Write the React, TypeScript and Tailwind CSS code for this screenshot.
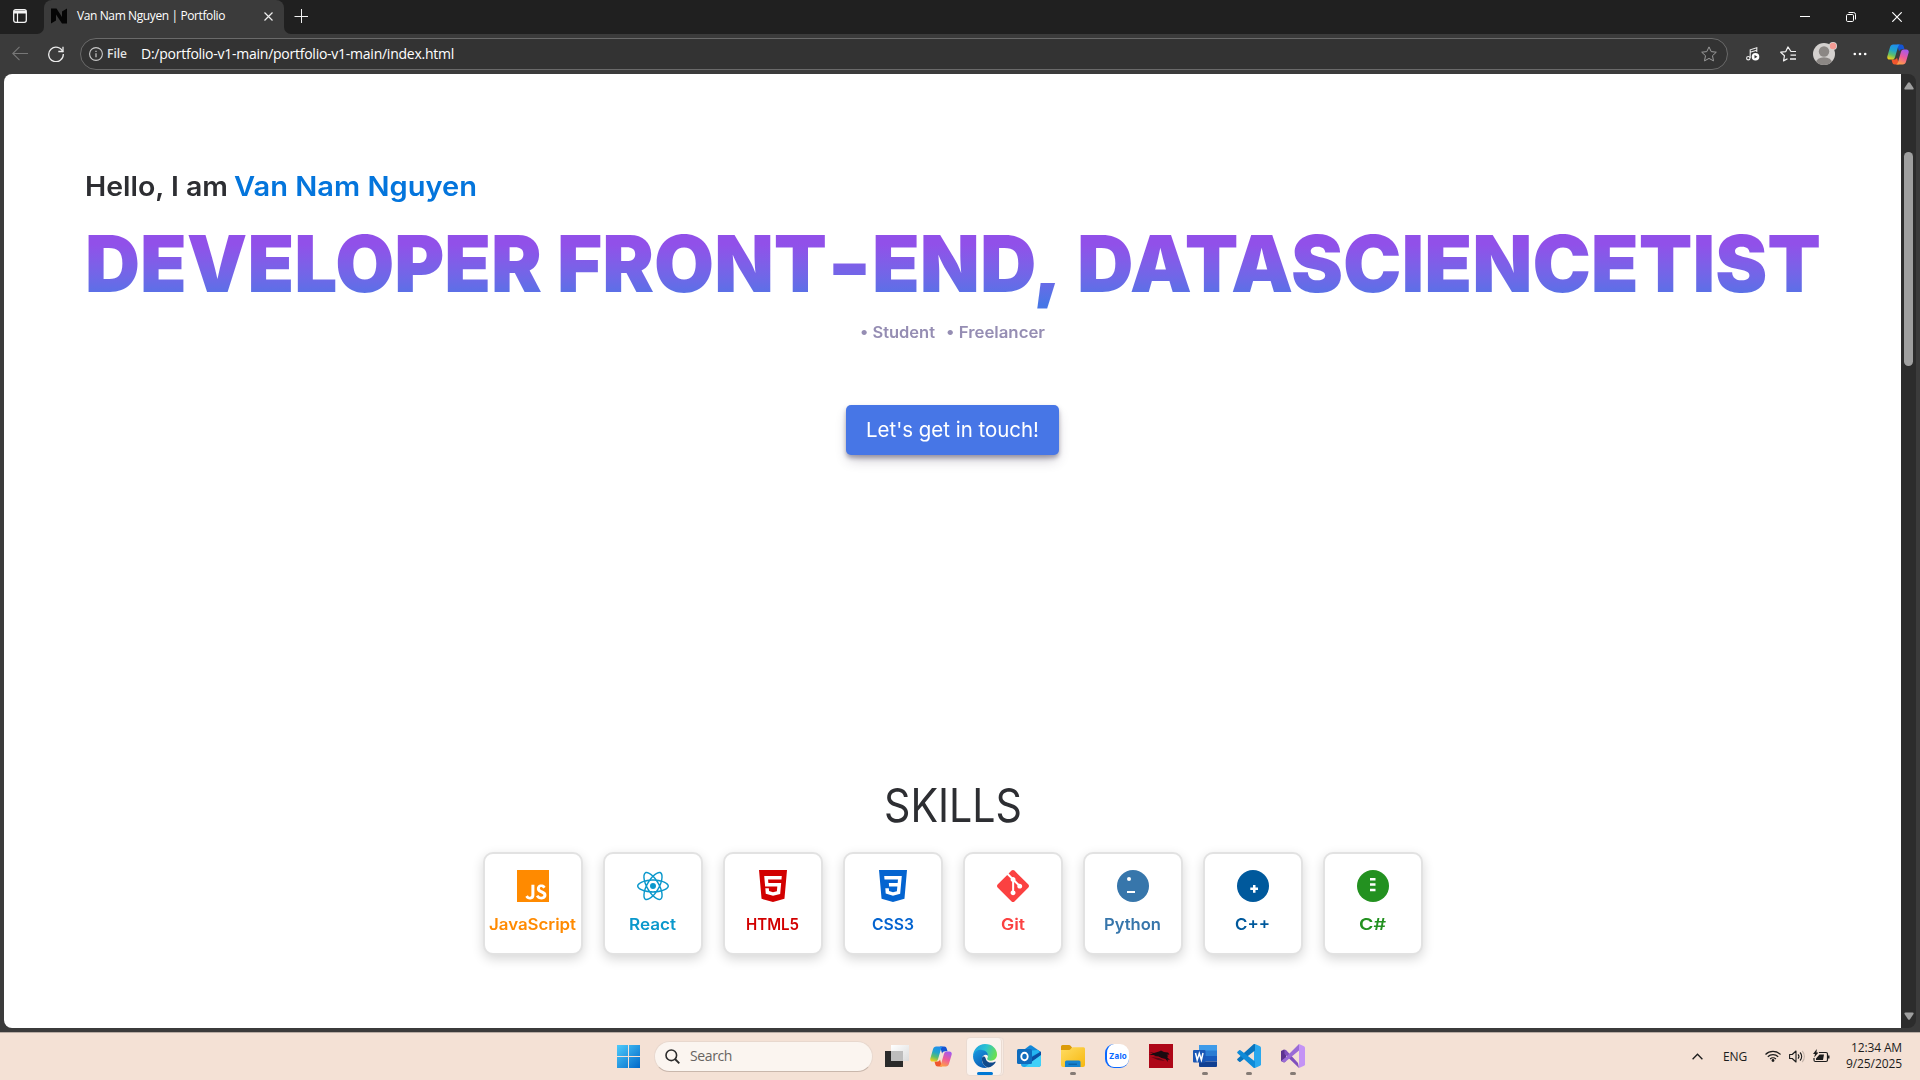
import { useLayoutEffect, useRef, type ReactNode } from "react";
import { SiGit, SiHtml5, SiJavascript, SiReact } from "react-icons/si";

/* Text tracked (or stretched) so that it fills an exact advance width. */
function Fit({ w, className = "", stretch = false, children }: { w: number; className?: string; stretch?: boolean; children: string }) {
  const ref = useRef<HTMLSpanElement>(null);
  useLayoutEffect(() => {
    const el = ref.current;
    if (!el) return;
    el.style.letterSpacing = "0px";
    el.style.transform = "none";
    const natural = el.getBoundingClientRect().width;
    if (stretch) {
      el.style.transform = `scaleX(${w / natural})`;
      el.style.marginRight = `${w - natural}px`;
    } else {
      el.style.letterSpacing = `${(w - natural) / children.length}px`;
    }
  }, [w, children, stretch]);
  return (
    <span ref={ref} className={`inline-block origin-left whitespace-pre ${className}`}>
      {children}
    </span>
  );
}

/* One piece of the headline, with its own copy of the vertical gradient. */
const Headline = ({ w, children }: { w: number; children: string }) => (
  <Fit w={w} stretch className="bg-linear-to-b from-[#9150e9] from-30% to-[#4776e6] to-90% bg-clip-text text-transparent">
    {children}
  </Fit>
);

function Copilot({ id }: { id: string }) {
  return (
    <svg width="22" height="21" viewBox="0 0 22 21" className="shrink-0">
      <defs>
        <linearGradient id={`${id}a`} x1="0.6" y1="0" x2="0.3" y2="1">
          <stop offset="0" stopColor="#1f8df0" />
          <stop offset="0.4" stopColor="#22a5c9" />
          <stop offset="0.7" stopColor="#5fbe6a" />
          <stop offset="1" stopColor="#f3cf16" />
        </linearGradient>
        <linearGradient id={`${id}b`} x1="0.7" y1="0" x2="0.3" y2="1">
          <stop offset="0" stopColor="#a259f0" />
          <stop offset="0.5" stopColor="#ee5a9a" />
          <stop offset="1" stopColor="#ffa243" />
        </linearGradient>
      </defs>
      <path d="M10 0.5h4.3c1.4 0 2 .8 2.4 2l.8 2.8h-2.4c-1.6 0-2.5.8-3 2.3z" fill="#1454d4" />
      <path d="M12 20.5H7.8c-1.5 0-2.1-.8-2.5-2l-.8-2.9h2.6c1.6 0 2.4-.8 2.9-2.2z" fill="#f0562d" />
      <path d="M6.2.5h7c-1.2.2-1.8 1.3-2.2 2.6L8 13.2c-.5 1.600-1.400 2.400-3 2.400H2.600C.6 15.600-.1 14 .4 12.200L3 3.300C3.600 1.500 4.500.5 6.200.5z" fill={`url(#${id}a)`} />
      <path d="M15.800 20.500h-7c1.200-.2 1.800-1.300 2.200-2.600l3-10.100c.5-1.600 1.400-2.400 3-2.400h2.400c2 0 2.700 1.600 2.200 3.400L19 17.700c-.6 1.800-1.500 2.800-3.200 2.800z" fill={`url(#${id}b)`} />
    </svg>
  );
}

function TabStrip() {
  return (
    <div className="flex h-[34px] items-center bg-[#202020]">
      <svg width="14" height="14" viewBox="0 0 14 14" className="ml-[13px] mt-[-2px]">
        <rect x="0.7" y="0.7" width="12.6" height="12.6" rx="2" fill="none" stroke="#f4f4f4" strokeWidth="1.300" />
        <path d="M1 1.500h12V4.500H1z" fill="#f4f4f4" />
        <path d="M4.500 4v9" stroke="#f4f4f4" strokeWidth="1.200" />
      </svg>
      <div className="flex h-full w-[17px] items-end justify-end">
        <svg width="7" height="7" viewBox="0 0 7 7">
          <path d="M7 0v7H0a7 7 0 0 0 7-7z" fill="#3b3b3b" />
        </svg>
      </div>
      <div className="flex h-full w-[240px] items-center rounded-t-[8px] bg-[#3b3b3b] pb-[2px]">
        <svg width="16" height="16" viewBox="0 0 16 16" className="ml-[7px]">
          <path d="M0 .5h5.500l5.500 8.500V3.500L16 .5v15h-5L5 6.500v6L0 15.500z" fill="#050505" />
        </svg>
        <div className="ml-[10px] h-4 w-[149px] font-['Open_Sans'] text-[12px] leading-4 text-white">
          <Fit w={148}>Van Nam Nguyen | Portfolio</Fit>
        </div>
        <svg width="9" height="9" viewBox="0 0 9 9" className="ml-[38px] mt-px">
          <path d="M.5.5l8 8M8.500.5l-8 8" stroke="#ededed" strokeWidth="1.200" />
        </svg>
      </div>
      <div className="flex h-full w-[7px] items-end">
        <svg width="7" height="7" viewBox="0 0 7 7">
          <path d="M0 0v7h7a7 7 0 0 1-7-7z" fill="#3b3b3b" />
        </svg>
      </div>
      <svg width="14" height="14" viewBox="0 0 14 14" className="ml-[3px] mt-[-3px]">
        <path d="M7.500 0v14M.5 7.500h14" stroke="#f1f1f1" strokeWidth="1" />
      </svg>
      <div className="ml-auto flex items-center pb-px pr-[18px] text-white">
        <svg width="10" height="10" viewBox="0 0 10 10">
          <path d="M0 4.500h10" stroke="currentColor" />
        </svg>
        <svg width="10" height="10" viewBox="0 0 10 10" className="ml-[36px]">
          <rect x=".5" y="2.500" width="7" height="7" rx="1.200" fill="none" stroke="currentColor" />
          <path d="M2.500.5h5a2 2 0 0 1 2 2v5" fill="none" stroke="currentColor" />
        </svg>
        <svg width="10" height="10" viewBox="0 0 10 10" className="ml-[36px]">
          <path d="M.3.3l9.400 9.400M9.700.3L.3 9.700" stroke="currentColor" strokeWidth="1.200" />
        </svg>
      </div>
    </div>
  );
}

function Toolbar() {
  return (
    <div className="flex h-10 items-center bg-[#3b3b3b]">
      <svg width="16" height="16" viewBox="0 0 16 16" className="ml-3">
        <path d="M16 7.500H.8M7.500.9L.8 7.500l6.700 6.600" fill="none" stroke="#777" strokeWidth="1.100" />
      </svg>
      <svg width="16" height="16" viewBox="0 0 16 16" className="ml-5">
        <path d="M14.900 6A7.300 7.300 0 1 0 15.300 8" fill="none" stroke="#ececec" strokeWidth="1.300" />
        <path d="M15 .7v4.800h-4.700" fill="none" stroke="#ececec" strokeWidth="1.300" />
      </svg>
      <div className="ml-4 flex h-8 w-[1648px] items-center rounded-full border border-[#6a6a6a] bg-[#333333] pl-[8px] pr-[10px]">
        <svg width="14" height="14" viewBox="0 0 14 14">
          <circle cx="7" cy="7" r="6.400" fill="none" stroke="#c9c9c9" strokeWidth="1.100" />
          <path d="M7 6.200v4M7 3.800v1.200" stroke="#c9c9c9" strokeWidth="1.200" />
        </svg>
        <div className="ml-[4px] h-4 w-[34px] font-['Open_Sans'] text-[12px] font-semibold leading-4 text-[#e4e4e4]">
          <Fit w={20}>File</Fit>
        </div>
        <div className="h-[18px] font-['Open_Sans'] text-[14px] leading-[18px] text-white">
          <Fit w={313}>D:/portfolio-v1-main/portfolio-v1-main/index.html</Fit>
        </div>
        <svg width="16" height="16" viewBox="0 0 16 16" className="ml-auto">
          <path d="M8 .9l2.200 4.700 5.100.6-3.800 3.500 1 5.200L8 12.400 3.500 14.900l1-5.200L.7 6.200l5.100-.6z" fill="none" stroke="#9a9a9a" strokeLinejoin="round" />
        </svg>
      </div>
      <svg width="14" height="14" viewBox="0 0 14 14" className="ml-[18px]">
        <path d="M4.200 11V2.800l6.600-2V5M4.200 5.200l6.600-2" fill="none" stroke="#ededed" strokeWidth="1.100" />
        <circle cx="2.300" cy="11.200" r="1.700" fill="none" stroke="#ededed" strokeWidth="1.100" />
        <circle cx="9.500" cy="9.800" r="3.800" fill="#fff" />
        <path d="M8.500 8l2.900 1.800-2.900 1.800z" fill="#333" />
      </svg>
      <svg width="17" height="16" viewBox="0 0 17 16" className="ml-5">
        <path d="M16 5.500h-5L7.900.9 5.800 5.600.7 6.200l3.800 3.500-1 5.200L7.500 12.700" fill="none" stroke="#f1f1f1" strokeWidth="1.200" strokeLinejoin="round" />
        <path d="M10.500 9.200H16M10 13H16" stroke="#f1f1f1" strokeWidth="1.300" />
      </svg>
      <svg width="24" height="24" viewBox="0 0 24 24" className="ml-4">
        <defs>
          <clipPath id="face">
            <circle cx="11" cy="12" r="11" />
          </clipPath>
        </defs>
        <circle cx="11" cy="12" r="11" fill="#d3d0ce" />
        <g clipPath="url(#face)" fill="#8b8784">
          <circle cx="11" cy="9.500" r="5.200" />
          <ellipse cx="11" cy="20.500" rx="8" ry="5.200" />
        </g>
        <circle cx="20" cy="4" r="4" fill="#d8d5d3" />
        <circle cx="20" cy="4" r="3.200" fill="#f59b94" />
      </svg>
      <svg width="14" height="4" viewBox="0 0 14 4" className="ml-4">
        <circle cx="1.800" cy="2" r="1.300" fill="#fff" />
        <circle cx="7" cy="2" r="1.300" fill="#fff" />
        <circle cx="12.200" cy="2" r="1.300" fill="#fff" />
      </svg>
      <div className="ml-5">
        <Copilot id="bar" />
      </div>
    </div>
  );
}

const Css3 = () => (
  <svg width="32" height="32" viewBox="0 0 24 24" fill="currentColor">
    <path d="M1.500 0h21l-1.910 21.563L11.977 24l-8.565-2.438L1.500 0zm17.090 4.413L5.410 4.410l.213 2.622 10.125.002-.255 2.716h-6.640l.24 2.573h6.182l-.366 3.523-2.910.804-2.956-.810-.188-2.110h-2.610l.29 3.855L12 19.288l5.373-1.530L18.590 4.414z" />
  </svg>
);

const Disc = ({ children }: { children: ReactNode }) => (
  <svg width="32" height="32" viewBox="0 0 32 32">
    <circle cx="16" cy="16" r="16" fill="currentColor" />
    <g fill="#fff">{children}</g>
  </svg>
);

const skills = [
  { name: "JavaScript", w: 87, color: "text-[#ff8a00]", icon: <SiJavascript size={32} /> },
  { name: "React", w: 47, color: "text-[#0a98cc]", icon: <SiReact size={32} /> },
  { name: "HTML5", w: 53, color: "text-[#d20000]", icon: <SiHtml5 size={32} /> },
  { name: "CSS3", w: 42, color: "text-[#0464d0]", icon: <Css3 /> },
  { name: "Git", w: 24, color: "text-[#fb4141]", icon: <SiGit size={32} /> },
  {
    name: "Python", w: 57, color: "text-[#3776ab]",
    icon: (
      <Disc>
        <circle cx="12" cy="9" r="2" />
        <path d="M10 21h8v2h-8z" />
      </Disc>
    ),
  },
  {
    name: "C++", w: 35, color: "text-[#00599c]",
    icon: (
      <Disc>
        <path d="M16 15h2.500v2.500H21v2.500h-2.500v2.700H16V20h-2.700v-2.500H16z" />
      </Disc>
    ),
  },
  {
    name: "C#", w: 27, color: "text-[#239120]",
    icon: (
      <Disc>
        <path d="M13 8h5.500v2.500H13zM13 13.300h5.500v2.500H13zM13 18.700h5.500v2.500H13z" />
      </Disc>
    ),
  },
];

function Page() {
  return (
    <main className="flex h-[954px] w-[1897px] flex-col items-center overflow-hidden rounded-l-[8px] bg-white font-['Inter']">
      <div className="mt-[95px] flex h-9 w-full pl-[81px] text-[27px] font-semibold leading-9 text-[#2d2e32]">
        <Fit w={143} stretch>Hello, I am</Fit>
        <Fit w={243} stretch className="ml-[6px] text-[#0475dc]">Van Nam Nguyen</Fit>
      </div>
      <h1 className="mt-[9px] flex h-[100px] w-full pl-[81px] text-[78px] font-black leading-[100px]">
        <Headline w={457}>DEVELOPER</Headline>
        <div className="ml-[15px] flex">
          <Headline w={270}>FRONT</Headline>
          <Headline w={45}>-</Headline>
          <Headline w={190}>END,</Headline>
        </div>
        <div className="ml-[15px]">
          <Headline w={744}>DATASCIENCETIST</Headline>
        </div>
      </h1>
      <div className="mt-[6px] flex h-6 w-[185px] text-base font-semibold leading-6 text-[#958db3]">
        <Fit w={75} stretch>• Student</Fit>
        <Fit w={99} stretch className="ml-[11px]">• Freelancer</Fit>
      </div>
      <button className="mt-[61px] flex h-[50px] w-[213px] justify-center rounded-[5px] bg-[#4776e6] text-[20.500px] leading-[50px] text-white shadow-[0_3px_4px_rgba(45,35,66,0.35),0_7px_13px_-3px_rgba(45,35,66,0.3)]">
        <Fit w={173} stretch>Let's get in touch!</Fit>
      </button>
      <h2 className="mt-[321px] flex h-[58px] text-[46px] font-normal leading-[58px] text-[#2d2e32]">
        <Fit w={138} stretch>SKILLS</Fit>
      </h2>
      <div className="mt-[18px] flex gap-5 pl-px">
        {skills.map((s) => (
          <div key={s.name} className={`flex h-[103px] w-[100px] flex-col items-center rounded-[10px] border-2 border-[#e2e2e2] bg-white pt-4 shadow-[0_4px_12px_rgba(0,0,0,0.16)] ${s.color}`}>
            {s.icon}
            <div className="mt-[10px] flex h-6 pr-px text-base font-semibold leading-6">
              <Fit w={s.w} stretch>{s.name}</Fit>
            </div>
          </div>
        ))}
      </div>
    </main>
  );
}

function Scrollbar() {
  return (
    <div className="flex h-[954px] w-[15px] flex-col items-center rounded-r-[8px] bg-[#2c2c2c]">
      <svg width="10" height="8" viewBox="0 0 10 8" className="mt-[8px] shrink-0">
        <path d="M4 .7q1-1 2 0l3.500 5.300q.5 1.500-1 1.500h-7q-1.500 0-1-1.500z" fill="#9f9f9f" />
      </svg>
      <div className="mt-[62px] h-[214px] w-[9px] shrink-0 rounded-full bg-[#9f9f9f]" />
      <svg width="10" height="8" viewBox="0 0 10 8" className="mb-[8px] mt-auto shrink-0">
        <path d="M4 7.300q1 1 2 0L9.500 2Q10 .5 8.500.5h-7Q0 .5.500 2z" fill="#9f9f9f" />
      </svg>
    </div>
  );
}

const Edge = () => (
  <svg width="24" height="24" viewBox="0 0 24 24">
    <defs>
      <linearGradient id="eg" x1="0" y1="0.2" x2="1" y2="0.5">
        <stop offset="0" stopColor="#1d9fe0" />
        <stop offset="0.5" stopColor="#2cc3d2" />
        <stop offset="1" stopColor="#6bdf4e" />
      </linearGradient>
      <linearGradient id="eb" x1="0" y1="0" x2="0.6" y2="1">
        <stop offset="0" stopColor="#1a9be2" />
        <stop offset="1" stopColor="#0b5cb4" />
      </linearGradient>
    </defs>
    <path d="M0 12C.3 5 5.500 0 12 0c7.500 0 12 5 12 10.300 0 4-2.700 6.400-6.200 6.400-2.600 0-4-1-3.600-2.200 1.300-1.600 1-4.500-1.700-6C8 6 2.500 7.500 0 12z" fill="url(#eg)" />
    <path d="M0 12C1.500 7.500 5 5.600 8.700 5.900c3.700.3 6.500 2.800 6.300 5.900-2-2-5.500-.8-6 2.700-.5 4 2 8.200 6 9.100C7 25.500 0 19.500 0 12z" fill="url(#eb)" />
    <path d="M9 14c-.5 4 2 8.800 6.200 9.600 3-.6 5.800-2.600 7.300-5.200.3-.9-.2-1-.7-.7-3.500 1.800-8.600 1-9.200-3.500C12 11.800 9.300 12 9 14z" fill="#114a8b" />
  </svg>
);

const Outlook = () => (
  <svg width="24" height="24" viewBox="0 0 24 24">
    <path d="M4 8L12.500 1.500Q13.500 1 14.500 1.500L24 8v4H4z" fill="#1187d8" />
    <path d="M9 7l12-1 2 3-9 5z" fill="#25b5f0" />
    <path d="M4 12l8 1 12-5v12q0 3-3 3H7q-3 0-3-3z" fill="#1ba7ea" />
    <path d="M24 7.500v4L14 18l-1-4z" fill="#0b4fa3" />
    <path d="M24 11v9q0 3-3 3H8z" fill="#3fd0f8" />
    <rect y="5" width="15" height="15" rx="1.500" fill="#0f6cbd" />
    <ellipse cx="7.500" cy="12.500" rx="3.200" ry="3.700" fill="none" stroke="#fff" strokeWidth="1.900" />
  </svg>
);

const Explorer = () => (
  <svg width="24" height="24" viewBox="0 0 24 24">
    <defs>
      <linearGradient id="fd" x1="0" y1="0" x2="1" y2="1">
        <stop offset="0" stopColor="#ffdc62" />
        <stop offset="1" stopColor="#f7b80f" />
      </linearGradient>
    </defs>
    <path d="M0 2.500Q0 1 1.500 1H8q1 0 1.800 1L11 3.500V8H0z" fill="#dc9c0a" />
    <path d="M0 6h8q1 0 1.700-.9l.8-1q.7-.8 1.500-.8h10.500q1.500 0 1.500 1.500V21q0 2-2 2H2q-2 0-2-2z" fill="url(#fd)" />
    <path d="M4 23v-5q0-1.500 1.500-1.500h12.500q1.500 0 1.500 1.500v5z" fill="#1583cf" />
    <path d="M7.500 19.500h8.500v1.500H7.500z" fill="#0c64a8" />
  </svg>
);

const Zalo = () => (
  <div className="flex h-6 w-6 items-center justify-center rounded-[9px] border-b border-l-2 border-[#0a68ff] bg-white font-['Inter'] text-[8px] font-bold leading-none text-[#0a68ff]">
    <Fit w={18}>Zalo</Fit>
  </div>
);

const Dragon = () => (
  <svg width="24" height="24" viewBox="0 0 24 24">
    <path d="M0 0h24v24H0z" fill="#ae0718" />
    <path d="M0 8l5 1 5-1.500 2-1 3 1.500 4 .5 1.500 2-3 .3 2 1.200-1.500 1 3 3-2.500-.5.5 2.500-2.500-3-4-1-3-1.500-5-.5 2-1H0l4-1.500z" fill="#1b0a10" />
    <path d="M2 13l8 1 6 3-7-1z" fill="#5e0714" />
  </svg>
);

const Word = () => (
  <svg width="24" height="24" viewBox="0 0 24 24">
    <path d="M6 1h18v6H6z" fill="#3f9be9" />
    <path d="M6 6.500h18V12H6z" fill="#2b7cd3" />
    <path d="M6 12h18v5.500H6z" fill="#185abd" />
    <path d="M6 17.500h18V22q0 1-1 1H7q-1 0-1-1z" fill="#103f91" />
    <rect y="6" width="12.500" height="12.500" rx="1" fill="#1b57b5" />
    <path d="M2.500 9l1.700 7L6.300 9.500 8.400 16 10 9" fill="none" stroke="#fff" strokeWidth="1.500" />
  </svg>
);

const Code = () => (
  <svg width="24" height="24" viewBox="0 0 24 24">
    <path d="M18 0l5 2.200q1 .5 1 1.500v16.600q0 1-1 1.500L18 24l-1-5V5z" fill="#2aa8ee" />
    <path d="M18 .2v6.300L3.500 17.700q-.7.500-1.300 0L.5 16.200q-.7-.8 0-1.500L16.300.4Q17.100-.4 18 .2z" fill="#0a74bd" />
    <path d="M18 23.800v-6.300L3.500 6.300q-.7-.5-1.300 0L.5 7.800q-.7.800 0 1.500l15.800 14.300q.8.800 1.700.2z" fill="#0f8bd8" />
  </svg>
);

const Studio = () => (
  <svg width="24" height="24" viewBox="0 0 24 24">
    <path d="M0 7l3-1.500L5 7v10l-2 1.500L0 17z" fill="#5d3390" />
    <path d="M3 5.500L5 6l12 13 1 5L3.500 10v-4z" fill="#8050bd" />
    <path d="M0 17l3.500 1.500L18 6.500V0L4.500 13.500z" fill="#9a6bd6" />
    <path d="M18 0l5 2.200q1 .5 1 1.500v16.600q0 1-1 1.500L18 24z" fill="#c493f5" />
  </svg>
);

function AppSlot({ children, running = false }: { children: ReactNode; running?: boolean }) {
  return (
    <div className="flex h-[38px] w-11 flex-col items-center pt-[7px]">
      {children}
      {running && <div className="mt-[4px] h-[3px] w-[6px] rounded-full bg-[#857b75]" />}
    </div>
  );
}

function Taskbar() {
  return (
    <div className="flex h-12 items-center border-t border-[#b9aca4] bg-[#f4e1d5] pb-px">
      <svg width="23" height="23" viewBox="0 0 23 23" className="ml-[617px]">
        <defs>
          <linearGradient id="win" gradientUnits="userSpaceOnUse" x1="0" y1="0" x2="23" y2="23">
            <stop offset="0" stopColor="#4dcbfb" />
            <stop offset="1" stopColor="#0067c8" />
          </linearGradient>
        </defs>
        <path d="M0 0h11v11H0zM12 0h11v11H12zM0 12h11v11H0zM12 12h11v11H12z" fill="url(#win)" />
      </svg>
      <div className="ml-[14px] flex h-[31px] w-[219px] items-center rounded-full border border-b-[#c9b7ac] border-x-[#e8d8ce] border-t-[#e8d8ce] bg-[#fbf5f0] pl-[10px]">
        <svg width="15" height="15" viewBox="0 0 15 15">
          <circle cx="6.300" cy="6.300" r="5.300" fill="none" stroke="#2c2c2c" strokeWidth="1.600" />
          <path d="M10 10l4.300 4.300" stroke="#2c2c2c" strokeWidth="1.900" />
        </svg>
        <div className="ml-[10px] font-['Open_Sans'] text-[14px] leading-5 text-[#686461]">
          <Fit w={42}>Search</Fit>
        </div>
      </div>
      <svg width="24" height="23" viewBox="0 0 24 23" className="ml-[12px]">
        <defs>
          <linearGradient id="tv" x1="0" y1="0" x2="1" y2="1">
            <stop offset="0" stopColor="#fff" />
            <stop offset="1" stopColor="#dcdcdc" />
          </linearGradient>
        </defs>
        <path d="M0 6h18v16H0z" fill="#2a2a2a" />
        <path d="M6 0h18v16H6z" fill="url(#tv)" />
        <path d="M6 6h12v10H6z" fill="#bdbdbd" />
      </svg>
      <div className="ml-[21px]">
        <Copilot id="task" />
      </div>
      <div className="ml-[14px] flex h-[39px] w-[38px] rounded-[4px] border border-[#eadbd2] bg-[#f8ebe3]">
        <div className="flex h-full w-[35px] flex-col items-center rounded-[4px] border-r border-[#eadbd2] bg-[#fbf3ee] pl-px pt-[6px]">
          <Edge />
          <div className="mt-[4px] h-[3px] w-4 rounded-full bg-[#0078d4]" />
        </div>
      </div>
      <div className="ml-[3px] flex">
        <AppSlot><Outlook /></AppSlot>
        <AppSlot running><Explorer /></AppSlot>
        <AppSlot><Zalo /></AppSlot>
        <AppSlot><Dragon /></AppSlot>
        <AppSlot running><Word /></AppSlot>
        <AppSlot running><Code /></AppSlot>
        <AppSlot running><Studio /></AppSlot>
      </div>
      <div className="ml-auto flex items-center pr-[18px] font-['Open_Sans'] text-[12px] text-[#1c1c1c]">
        <svg width="11" height="7" viewBox="0 0 11 7">
          <path d="M.6 6.200l4.900-5 4.900 5" fill="none" stroke="currentColor" strokeWidth="1.300" />
        </svg>
        <div className="ml-[20px] mt-[2px] w-[42px] leading-4">
          <Fit w={24}>ENG</Fit>
        </div>
        <svg width="16" height="12" viewBox="0 0 16 12">
          <g fill="none" stroke="currentColor" strokeWidth="1.200">
            <path d="M.5 4.500a10.600 10.600 0 0 1 15 0M2.800 6.800a7.400 7.400 0 0 1 10.400 0M5.100 9a4.200 4.200 0 0 1 5.800 0" />
          </g>
          <circle cx="8" cy="10.500" r="1.400" fill="currentColor" />
        </svg>
        <svg width="16" height="13" viewBox="0 0 16 13" className="ml-2">
          <path d="M.6 4.500h2.600L7 1v11L3.200 8.500H.6z" fill="none" stroke="currentColor" strokeWidth="1.100" strokeLinejoin="round" />
          <path d="M9 4.300a3.300 3.300 0 0 1 0 4.400M11 2.500a5.600 5.600 0 0 1 0 8" fill="none" stroke="currentColor" strokeWidth="1.100" />
          <path d="M13.200 1a8 8 0 0 1 0 11" fill="none" stroke="#c5b5ab" strokeWidth="1.100" />
        </svg>
        <svg width="17" height="14" viewBox="0 0 17 14" className="ml-2">
          <path d="M6 3.500h7q1.500 0 1.500 1.500v6q0 1.500-1.500 1.500H2.500Q1 12.500 1 11V9" fill="none" stroke="currentColor" strokeWidth="1.200" />
          <path d="M6.500 5.500H11l-1 5.500H3V9.500zM15 6.500h1.500v3H15zM3.800 0L0 5h2L1.200 8.500 5.500 3.500h-2z" fill="currentColor" />
        </svg>
        <div className="ml-[15px] flex w-[57px] flex-col items-end leading-4">
          <Fit w={51}>12:34 AM</Fit>
          <Fit w={56}>9/25/2025</Fit>
        </div>
      </div>
    </div>
  );
}

export default function App() {
  return (
    <div className="flex h-[1080px] w-[1920px] flex-col overflow-hidden bg-[#3b3b3b]">
      <TabStrip />
      <Toolbar />
      <div className="flex h-[958px] pl-1">
        <Page />
        <Scrollbar />
      </div>
      <Taskbar />
    </div>
  );
}
